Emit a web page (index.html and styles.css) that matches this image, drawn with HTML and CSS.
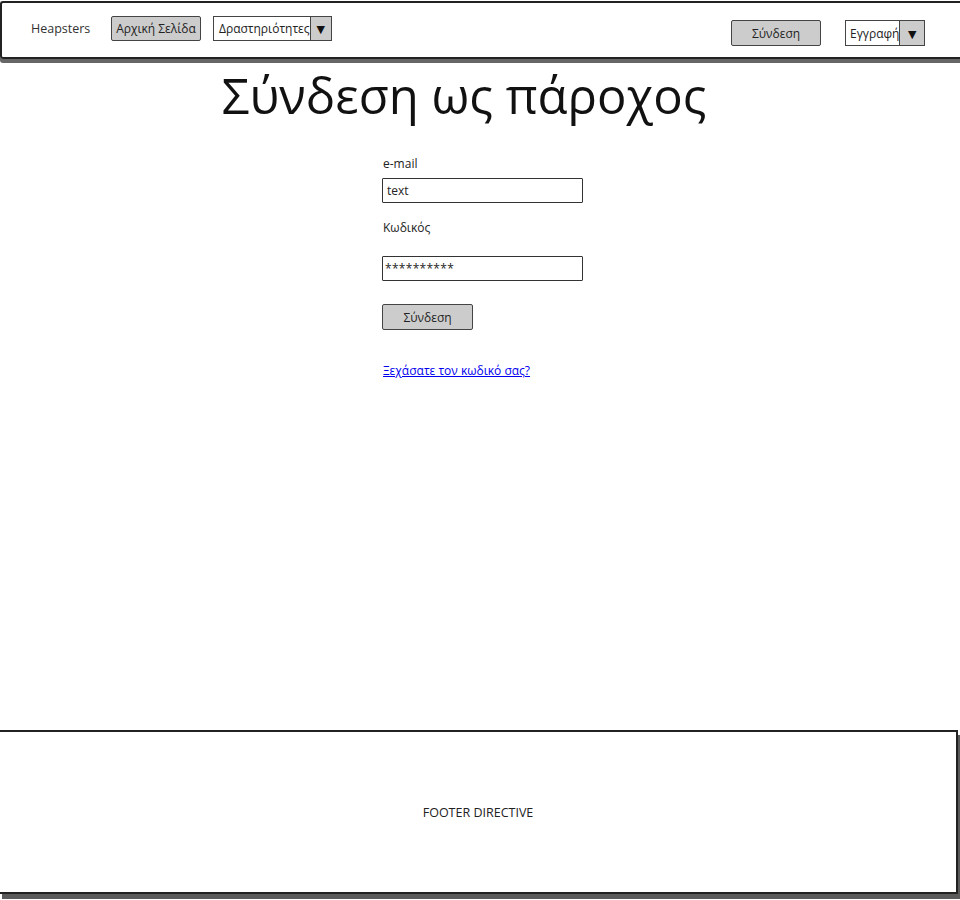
FILE: index.html
```html
<!DOCTYPE html>
<html lang="el">
<head>
<meta charset="utf-8">
<title>Σύνδεση ως πάροχος</title>
<link rel="stylesheet" href="styles.css">
</head>
<body>
<div class="page">
  <header class="topbar">
    <div class="nav-left">
      <span class="brand">Heapsters</span>
      <button class="btn btn-home">Αρχική Σελίδα</button>
      <div class="dropdown dd-act"><span class="dd-label">Δραστηριότητες</span><span class="dd-arrow">▼</span></div>
    </div>
    <div class="nav-right">
      <button class="btn btn-login">Σύνδεση</button>
      <div class="dropdown dd-reg"><span class="dd-label">Εγγραφή</span><span class="dd-arrow">▼</span></div>
    </div>
  </header>
  <main class="content">
    <h1 class="title">Σύνδεση ως πάροχος</h1>
    <form class="login-form">
      <label class="lbl lbl-email">e-mail</label>
      <div class="field">text</div>
      <label class="lbl lbl-pass">Κωδικός</label>
      <div class="field field-pass">**********</div>
      <button type="button" class="btn btn-submit">Σύνδεση</button>
      <a class="forgot" href="#">Ξεχάσατε τον κωδικό σας?</a>
    </form>
  </main>
  <footer class="footer">FOOTER DIRECTIVE</footer>
</div>
</body>
</html>
```

FILE: styles.css
```css
* { box-sizing: border-box; }
html, body { margin: 0; padding: 0; background: #fff; }
body { font-family: "Open Sans", "DejaVu Sans", sans-serif; color: #222; font-size: 12px; }
.page { width: 960px; height: 900px; display: flex; flex-direction: column; overflow: hidden; }

.topbar {
  height: 58px;
  margin-top: 1px;
  border-top: 2px solid #222;
  border-left: 2px solid #222;
  border-bottom: 2px solid #222;
  box-shadow: 0 4px 0 #666;
  display: flex;
  justify-content: space-between;
  align-items: flex-start;
  flex: none;
  border-top-left-radius: 3px;
  border-bottom-left-radius: 3px;
}
.nav-left { display: flex; align-items: center; padding-top: 13px; }
.brand { margin-left: 29px; width: 80px; font-size: 12.5px; color: #333; }
.btn {
  font-family: inherit;
  font-size: 12px;
  color: #222;
  background: #cccccc;
  border: 1px solid #444;
  border-radius: 2px;
  padding: 0;
  height: 25px;
  display: flex;
  align-items: center;
  justify-content: center;
}
.btn-home { width: 90px; margin-left: 0; }
.dropdown {
  display: flex;
  height: 25px;
  border: 1px solid #444;
  background: #fff;
  font-size: 12px;
}
.dd-label { display: flex; align-items: center; padding-left: 5px; flex: 1; }
.dd-arrow {
  width: 25px;
  border-left: 1px solid #444;
  background: #cccccc;
  display: flex;
  align-items: center;
  justify-content: center;
  font-size: 11px;
  color: #111;
}
.dd-act { width: 119px; margin-left: 12px; }
.nav-right { display: flex; align-items: center; padding-top: 17px; padding-right: 35px; }
.btn-login { width: 90px; height: 26px; }
.dd-reg { width: 80px; height: 26px; margin-left: 24px; }
.dd-reg .dd-label { padding-left: 4px; }

.content { flex: 1; display: flex; flex-direction: column; }
.title {
  margin: 4px 0 0 0;
  padding-right: 32px;
  text-align: center;
  font-weight: 400;
  font-size: 49px;
  line-height: 64px;
  color: #111;
}
.login-form { display: flex; flex-direction: column; align-items: flex-start; margin-left: 382px; margin-top: 29px; width: 201px; }
.lbl { font-size: 12px; line-height: 16px; margin-left: 1px; color: #222; }
.lbl-email { margin-bottom: 6px; }
.field {
  width: 201px;
  height: 25px;
  border: 1px solid #333;
  border-radius: 1px;
  padding-left: 4px;
  display: flex;
  align-items: center;
  font-size: 12px;
}
.lbl-pass { margin-top: 17px; margin-bottom: 20px; }
.field-pass { padding-left: 2px; letter-spacing: 0.3px; }
.btn-submit { width: 91px; height: 26px; margin-top: 23px; }
.forgot { margin-top: 32px; margin-left: 1px; font-size: 12px; color: #0000ee; text-decoration: underline; }

.footer {
  flex: none;
  height: 164px;
  width: 958px;
  margin-bottom: 6px;
  border-top: 2px solid #222;
  border-right: 2px solid #222;
  border-bottom: 2px solid #222;
  box-shadow: 2px 5px 0 #5a5a5a;
  display: flex;
  align-items: center;
  justify-content: center;
  font-size: 12.5px;
  color: #222;
  padding-left: 0;
}
```
